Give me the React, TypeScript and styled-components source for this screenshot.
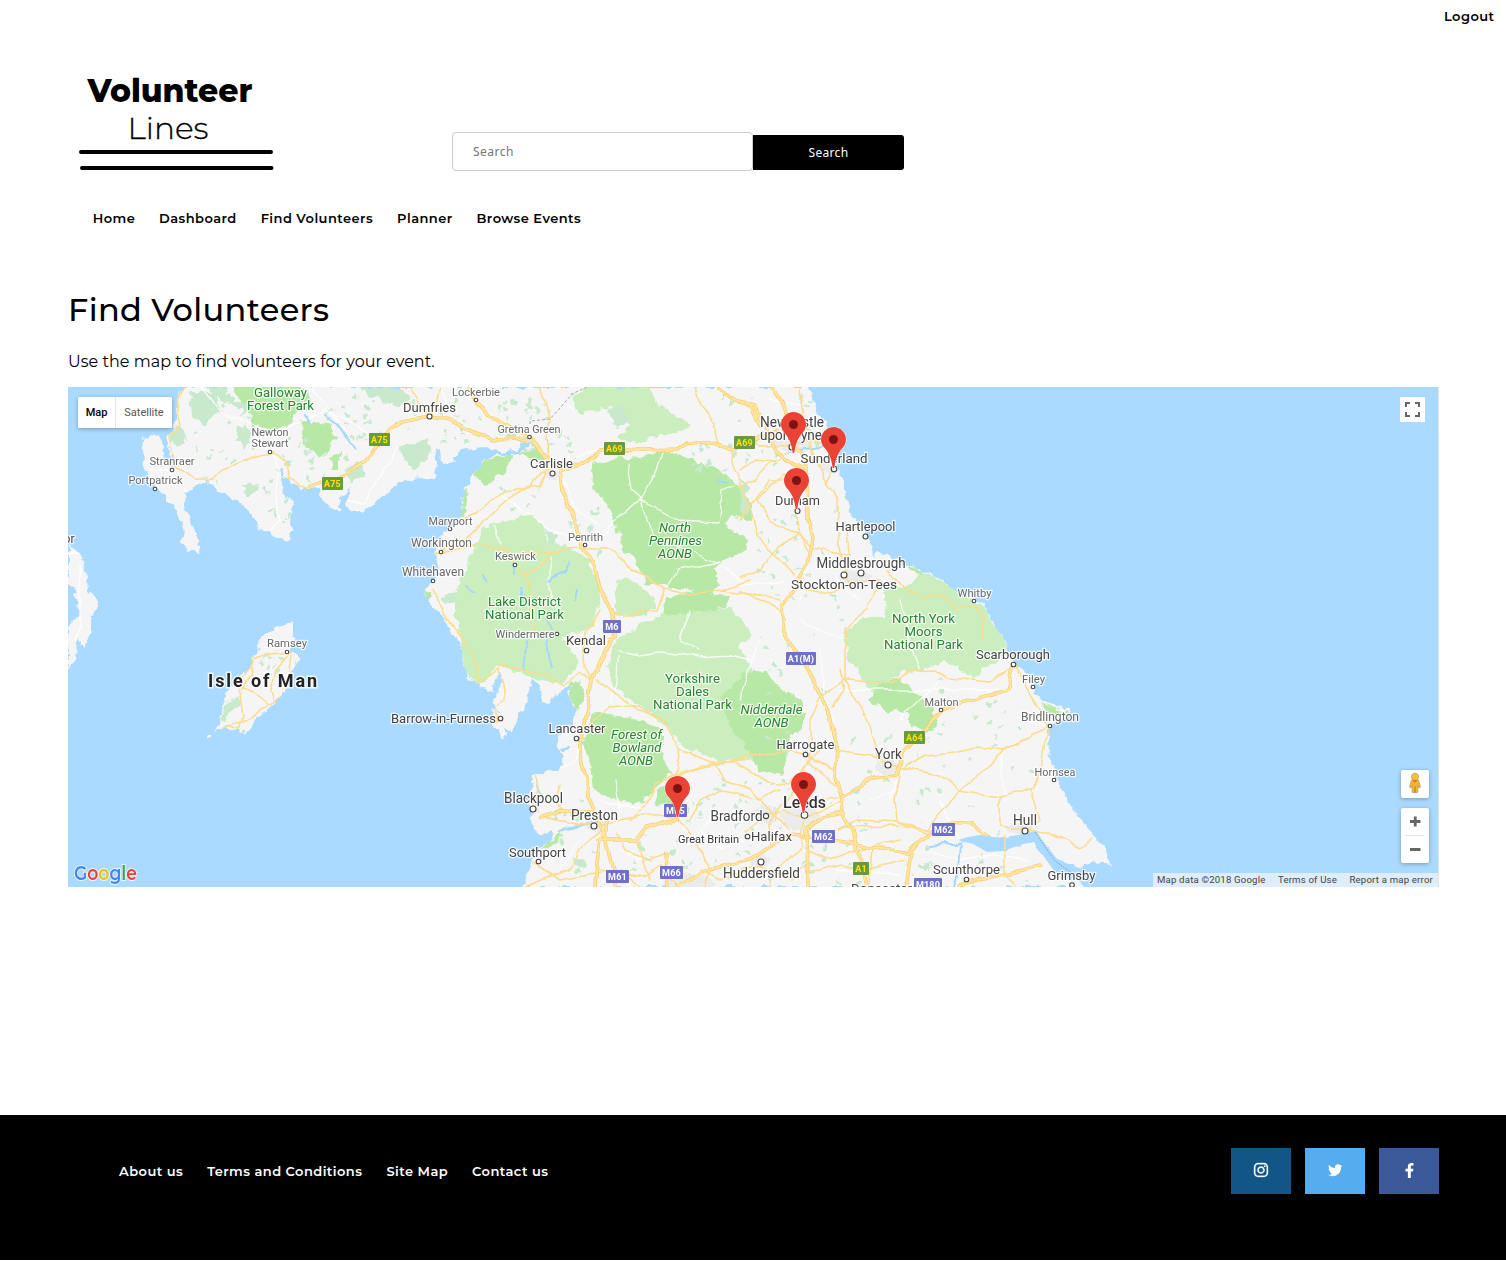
import React from "react";
import styled, { createGlobalStyle } from "styled-components";
import { FaInstagram, FaTwitter, FaFacebookF } from "react-icons/fa";

const heading = `Montserrat, Inter, "Noto Sans", sans-serif`;
const small = `"Noto Sans", "DejaVu Sans", sans-serif`;
const mapFont = `Roboto, "Liberation Sans", sans-serif`;

const GlobalStyle = createGlobalStyle`
  * { box-sizing: border-box; }
  body { margin: 0; background: #fff; color: #000; font-family: ${heading}; }
  a { color: inherit; text-decoration: none; }
`;

const Page = styled.div`
  display: flex;
  flex-direction: column;
  min-height: 1261px;
`;

const TopBar = styled.div`
  display: flex;
  justify-content: flex-end;
  height: 33px;
  padding: 8px 11.5px 0 0;
`;

const NavLink = styled.a`
  font-size: 13px;
  font-weight: 600;
  line-height: 16px;
  letter-spacing: 0.45px;
  white-space: nowrap;
`;

const Header = styled.header`
  display: flex;
  height: 147px;
  padding-left: 68px;
`;

const LogoBox = styled.a`
  display: block;
  width: 384px;
  padding-top: 37px;
`;

const SearchForm = styled.form`
  display: flex;
  align-items: flex-start;
  padding-top: 99px;
`;

const SearchInput = styled.input`
  width: 301px;
  height: 39px;
  padding: 0 20px;
  border: 1px solid #ccc;
  border-radius: 4px;
  background: #fff;
  font: 12px ${small};
  letter-spacing: 0.5px;
  &::placeholder { color: #757575; opacity: 1; }
`;

const SearchButton = styled.button`
  width: 151px;
  height: 35px;
  margin-top: 3px;
  padding: 0;
  border: 0;
  border-radius: 0 3px 3px 0;
  background: #000;
  color: #fff;
  font: 12px ${small};
  letter-spacing: 0.3px;
`;

const MainNav = styled.nav`
  display: flex;
  gap: 23.9px;
  height: 80px;
  padding: 30px 0 0 92.7px;
`;

const Main = styled.main`
  padding: 0 67px 0 68px;
  height: 855px;
`;

const Title = styled.h1`
  margin: 0;
  padding-top: 28px;
  font-size: 32px;
  font-weight: 500;
  line-height: 44px;
  letter-spacing: 0.35px;
`;

const Intro = styled.p`
  margin: 0;
  padding-top: 19px;
  height: 55px;
  font-size: 16px;
  line-height: 22px;
  letter-spacing: 0.03px;
`;

const MapFrame = styled.section`
  position: relative;
  height: 500px;
  overflow: hidden;
  border-right: 1px solid #e5e3df;
  background: #aadaff;
  font-family: ${mapFont};
`;

const MapCanvas = styled.svg`
  display: block;
  width: 1370px;
  height: 500px;
`;

const TypeSwitch = styled.div`
  position: absolute;
  top: 10px;
  left: 10px;
  display: flex;
  height: 31px;
  border-radius: 2px;
  overflow: hidden;
  background: #fff;
  box-shadow: 0 1px 4px rgba(0, 0, 0, 0.3);
`;

const TypeOption = styled.button<{ $active?: boolean }>`
  width: ${(p) => (p.$active ? 37 : 57)}px;
  padding: 0;
  border: 0;
  border-left: ${(p) => (p.$active ? "0" : "1px solid #e6e6e6")};
  background: #fff;
  color: ${(p) => (p.$active ? "#000" : "#565656")};
  font: ${(p) => (p.$active ? 500 : 400)} 11px ${mapFont};
`;

const FullscreenButton = styled.button`
  position: absolute;
  top: 10px;
  right: 13px;
  width: 25px;
  height: 25px;
  padding: 0;
  border: 0;
  background: #fff;
  svg { display: block; }
`;

const Controls = styled.div`
  position: absolute;
  right: 9px;
  bottom: 24px;
  display: flex;
  flex-direction: column;
  gap: 10px;
`;

const ControlCard = styled.div`
  display: flex;
  flex-direction: column;
  align-items: center;
  width: 28px;
  border-radius: 2px;
  background: #fff;
  box-shadow: 0 1px 4px rgba(0, 0, 0, 0.3);
  svg { display: block; }
`;

const Legal = styled.div`
  position: absolute;
  right: 0;
  bottom: 0;
  display: flex;
  justify-content: space-between;
  width: 285px;
  height: 14px;
  padding: 0 5px 0 4px;
  background: rgba(245, 245, 245, 0.7);
  color: #444;
  font-size: 9.6px;
  line-height: 14px;
  letter-spacing: 0.19px;
`;

const Footer = styled.footer`
  display: flex;
  justify-content: space-between;
  height: 145px;
  padding: 33px 67px 0 119px;
  background: #000;
  color: #fff;
`;

const FooterLinks = styled.nav`
  display: flex;
  gap: 24px;
  padding-top: 15px;
`;

const SocialLinks = styled.div`
  display: flex;
  gap: 14px;
`;

const SocialLink = styled.a<{ $color: string; $icon: number }>`
  display: flex;
  align-items: center;
  justify-content: center;
  width: 60px;
  height: 46px;
  padding-bottom: 2px;
  background: ${(p) => p.$color};
  font-size: ${(p) => p.$icon}px;
`;

const Logo = () => (
  <svg width="220" height="110" viewBox="68 70 220 110">
    <g textAnchor="start" fontFamily={heading} fontSize="32">
      <text x="87.5" y="102" fontWeight="800" textLength="165" lengthAdjust="spacingAndGlyphs">Volunteer</text>
      <text x="127.5" y="139" fontSize="31" fontWeight="350" textLength="81" lengthAdjust="spacingAndGlyphs" stroke="#000" strokeWidth=".3">Lines</text>
    </g>
    <path d="M81 152H271M82 168H271.5" stroke="#000" strokeWidth="4" strokeLinecap="round" />
  </svg>
);

/* Map geometry, on a grid whose origin is the map's north-west corner at (68, 387). */
const mainland =
  "185,387 178,395 175,410 177,422 168,436 171,449 174,462 173,467 168,465 164,453 163,442 157,434 145,437 142,447 143,465 151,480 160,492 171,504 178,517 185,530 181,542 188,551 201,554 198,547 199,540 193,530 190,517 184,504 185,494 195,487 210,481 218,493 228,494 245,507 253,517 256,525 271,535 286,540 294,530 290,524 291,510 296,502 283,494 281,475 288,480 301,490 318,487 320,497 331,507 340,512 341,497 351,487 346,504 351,511 365,511 373,505 388,492 401,482 420,478 432,480 437,464 435,449 442,450 443,464 453,462 462,450 483,447 500,452 517,450 527,442 532,440 528,447 517,455 497,455 485,459 475,472 465,487 463,504 460,517 448,529 437,544 435,555 440,564 432,582 423,590 430,604 443,620 455,637 462,650 463,663 468,677 480,688 493,692 495,685 500,670 502,683 495,700 498,710 491,709 493,723 502,738 508,737 505,728 512,732 515,722 527,703 530,690 532,678 540,688 542,702 547,705 553,697 562,690 573,685 567,693 577,710 573,723 557,737 557,747 563,753 563,765 557,770 533,775 532,787 530,810 532,827 540,833 553,832 550,840 540,850 532,863 522,887 1087,887 1073,880 1053,870 1040,850 1033,842 1023,843 1003,850 987,850 973,842 960,843 963,840 980,837 993,838 1007,838 1023,835 1035,832 1043,843 1053,857 1067,863 1080,867 1093,862 1110,865 1113,875 1110,863 1103,847 1093,833 1073,810 1060,787 1052,767 1047,743 1052,723 1070,715 1068,710 1043,702 1035,695 1030,677 1020,670 1012,657 1007,645 1003,637 990,620 987,609 973,597 957,592 940,579 920,569 903,564 890,557 878,552 873,557 872,547 865,537 867,530 857,522 848,510 845,490 840,474 832,447 825,420 815,407 808,387";
const isleOfMan =
  "292,622 275,628 261,637 256,650 250,667 238,680 228,690 224,707 218,723 215,733 223,728 238,730 245,735 248,727 258,717 270,707 285,693 288,677 293,668 301,658 293,655 291,647 292,633";
const calf = "207,736 211,733 212,737 208,738";
const ireland =
  "68,544 73,549 80,554 88,577 89,590 96,600 95,614 91,617 91,630 83,648 78,637 76,643 77,657 68,670 68,633 70,635 71,622 79,615 76,592 68,584";
const humber =
  "958,840 968,837 980,835 993,837 1007,838 1023,834 1036,831 1046,845 1057,859 1075,867 1074,881 1055,872 1042,854 1034,842 1023,844 1003,851 987,852 973,844";

const nationalParks = [
  "493,524 530,515 543,524 547,540 577,550 590,564 600,587 600,604 593,627 563,637 580,663 562,685 530,677 500,665 478,687 463,667 460,640 455,617 455,597 467,567 477,540 483,527",
  "617,640 640,625 660,615 700,610 730,608 742,620 752,635 738,648 748,662 757,675 740,690 725,705 735,730 750,745 757,760 720,762 712,757 685,748 670,730 650,712 625,697 612,682 608,665 613,655",
  "617,580 625,575 655,598 655,610 640,617 614,613",
  "883,590 907,587 920,570 947,584 973,600 987,610 1003,637 1010,653 987,667 973,678 943,660 927,670 900,673 873,693 863,680 850,660 847,647 843,634 863,617 887,617",
  "573,400 587,387 650,387 657,404 680,417 690,427 653,437 633,444 617,437 630,424 613,407 580,414",
];
const naturalBeauty = [
  "592,464 613,460 653,455 663,449 683,457 700,464 720,470 733,480 748,495 752,520 733,517 723,524 745,537 748,550 725,560 715,570 718,584 710,593 690,590 667,587 647,584 633,557 623,550 617,527 607,504 593,487",
  "667,597 700,590 730,597 727,607 690,613 663,615",
  "720,697 748,670 765,672 782,690 803,700 803,730 790,735 785,775 768,773 757,770 750,750 735,735 727,715",
  "593,713 613,715 647,722 663,730 663,757 672,773 660,783 640,803 613,800 593,790 590,763 583,743",
  "655,805 660,787 672,783 672,806",
  "568,683 580,680 585,700 577,712 570,700",
  "485,459 513,454 503,474 487,487 473,474",
  "517,454 537,447 543,460 530,458",
  "867,700 880,684 897,678 915,692 933,707 937,727 927,733 910,723 907,713 887,710",
  "1038,702 1065,711 1071,716 1048,712",
  "230,387 300,387 312,400 300,405 290,425 270,430 252,427 250,415 240,400",
  "301,420 333,425 336,440 320,458 303,443",
  "332,460 340,450 338,468 331,470",
  "465,487 467,495 463,517 459,519",
  "545,843 562,833 563,836 548,849 542,850",
  "905,566 918,569 925,575 910,572",
  "423,590 430,594 429,603",
  "848,507 845,492 849,500 853,512",
];
const forests = [
  "190,392 215,392 222,410 205,424 192,414",
  "168,430 180,427 188,442 175,448",
  "206,387 225,387 232,400 250,405 245,412 226,402",
  "238,424 252,433 245,450 237,440",
  "244,485 258,484 257,492 246,496",
  "345,470 360,460 365,474 350,482",
  "358,387 398,387 410,398 398,408 380,400 372,396",
  "400,445 428,440 430,458 413,470 403,458",
  "228,702 240,696 241,705 230,710 224,722 220,720",
  "259,663 264,660 263,665",
  "608,410 620,405 630,420 618,428",
  "742,480 748,487 746,515 740,512",
  "575,858 585,860 584,868 576,866",
  "917,865 932,862 928,872",
  "545,530 558,535 557,544 549,541",
  "440,598 454,592 456,602 446,604",
];

const trunk = [
  "470,387 477,404 487,415 510,427 530,437 540,449 550,462 560,470 562,490 573,517 582,547 592,560 600,587 613,614 615,637 610,640 592,680 587,707 580,743 580,757 587,777 588,797 595,813 603,830 607,847 613,870 617,887",
  "603,830 600,840 597,863 595,887",
  "598,840 637,840 647,827 677,818",
  "540,817 560,812 593,813",
  "773,387 783,404 789,425 795,445 806,455 807,470 808,520 813,537 808,564 797,584 783,604 785,637 803,660 820,693 830,717 837,747 835,777 842,797 843,817 853,830 857,850 863,863 868,887",
  "677,887 690,880 707,870 750,860 770,847 793,835 853,843 873,848 907,852 930,832 953,823 973,825 987,837",
  "777,452 793,464 807,470",
  "910,852 905,887",
  "843,813 823,817 807,830 808,887",
  "665,853 667,887",
  "842,797 873,778 897,775 903,753 930,723 943,708 973,700 1007,690 1012,667",
  "308,489 321,482 345,477 355,467 366,462 388,429 401,422 430,416 450,420 467,430 493,440 530,439",
  "560,472 583,464 600,452 627,449 640,450 677,449 687,442 720,445 730,449 750,442 777,430",
  "717,387 735,400 755,406 765,425 777,452",
  "740,403 751,407 760,425",
  "960,885 980,879 1010,873 1040,866",
  "598,840 607,830 607,820",
];
const roads = [
  "185,387 178,398 177,412 180,425 168,437 173,455 175,467 195,479 208,479 245,460 275,452 285,462 290,480 308,489",
  "410,387 418,402 430,416", "430,416 437,400 440,387", "540,387 545,405 548,420 545,440 550,462",
  "695,387 700,405 715,425 718,445", "730,449 733,465 743,487 750,505 757,535 775,555 795,577",
  "740,487 755,480 770,464 780,460", "740,440 760,445 785,445 810,440 828,443", "800,387 802,410 810,440 820,470 826,484",
  "834,468 825,484 838,500 838,540 845,565 848,582", "808,490 785,475 770,485 757,500",
  "797,510 797,525 803,540 808,550", "740,578 760,570 780,545 800,535 813,547 850,555 848,530 868,525",
  "740,590 770,605 783,612", "797,587 830,593 850,583 880,580 870,600 865,610 845,630 845,680 863,710 873,740 878,760",
  "887,570 905,590 925,598 945,595 955,607 975,608 985,620 983,640", "845,680 873,682 893,682 910,672 935,671 950,678 990,682 1010,668",
  "832,708 845,690 840,670", "810,758 810,720 820,695 845,680", "740,758 760,753 790,751 808,755 835,770",
  "837,750 870,755 903,768 925,755 955,752 975,747 1003,750 1048,727", "903,768 940,775 960,790 1000,797 1030,790 1040,775 1045,740 1052,725",
  "900,775 895,800 897,822 930,835", "960,790 940,810 927,830 897,826 853,827", "1003,750 985,770 960,790",
  "1030,790 1040,820 1030,830 1000,825 1000,797", "1025,832 1055,835 1080,848 1093,838",
  "1015,660 1030,695 1047,723 1050,728", "1005,853 1005,870 1015,887",
  "500,670 505,690 505,700 495,710 498,722", "500,668 478,682 471,650 452,625 440,605 433,587",
  "435,555 445,550 470,535 490,515 520,490 540,487 545,470", "460,522 480,510 500,493 530,487",
  "440,555 460,548 480,545 505,550 515,565 525,575 530,600 535,635", "505,560 540,552 580,549 610,549 633,570 665,588 690,594 720,590 750,580",
  "665,588 657,610 630,615 613,615", "720,590 750,593 780,600", "525,575 540,565 550,552",
  "500,665 530,672 545,672 562,685 580,672 592,680", "592,680 583,660 585,635 600,610",
  "597,680 630,705 650,713 665,722 680,750 675,775", "587,725 610,708 640,705 650,713",
  "675,775 700,768 735,760 750,760", "630,820 650,800 655,785 675,773 715,763 725,780 750,790 770,810 790,830",
  "680,750 712,762 735,762 770,783 790,785 805,765", "540,817 570,823 600,825 640,815 660,815 677,818",
  "600,830 580,850 570,870 548,877 525,887", "533,863 560,880 600,873", "600,870 645,877 660,865 677,887",
  "677,818 695,840 710,870 705,887", "637,843 650,880", "740,795 720,790 700,800 690,820",
  "745,830 765,815 785,810 805,818 845,800", "770,847 768,825 780,805 800,785 805,765 825,745",
  "808,760 825,775 835,785", "805,818 800,850 775,870 770,887", "745,870 760,865 790,880 808,865",
  "808,850 830,860 855,850 900,840", "808,875 840,865 865,870 905,860", "873,848 870,887",
  "838,828 855,820 900,822 930,832", "583,463 560,465 540,472 530,488",
  "740,520 755,500 770,480 808,480", "565,815 556,800 560,785",
  "740,470 755,460 775,462", "757,500 770,520 785,530 800,535", "535,775 538,790 534,805", "618,835 625,850 650,860 665,853",
  "620,870 640,887", "700,870 720,880 745,870", "820,800 842,797", "780,790 760,800 740,795",
  "292,651 270,653 253,659 250,667 238,680", "292,651 275,670 270,690 273,700", "238,680 243,715 240,728",
  "250,665 252,673 242,690", "238,687 255,693 268,703", "283,697 268,703 255,715 243,722 225,725 240,729",
  "292,655 290,670 285,690",
];
const lanes = [
  "200,387 210,400 225,415 245,420 275,435 310,417 325,412 345,418 370,435", "312,387 325,405 345,430 350,445",
  "275,455 278,475 275,500 280,520 270,528", "340,500 365,503 370,490 388,465 398,445",
  "185,494 170,470 150,470", "550,462 600,450", "565,480 575,510 600,525",
  "663,452 655,475 641,500 655,508 675,520 720,522", "628,463 632,490 641,498 625,513 612,520 595,545",
  "641,500 655,540 690,550 722,566 740,580", "720,518 722,490 735,485", "667,588 678,570 720,562",
  "500,495 530,515 545,525 580,545", "550,555 550,590 560,620", "495,525 500,545",
  "440,530 455,540 475,550", "618,650 640,655 660,652 700,657 730,655 752,660", "618,655 617,685 610,705",
  "690,610 680,640 700,650", "740,585 783,582", "810,565 800,600", "800,620 845,640", "820,650 825,700 835,720",
  "900,600 910,640 920,670", "940,680 920,700 900,720", "1000,750 1005,800", "900,775 890,800",
  "555,770 575,760 580,740", "600,800 640,808", "620,810 615,780", "68,552 78,552", "79,565 80,600 80,625 76,640",
  "840,690 1000,690", "940,800 960,840", "870,800 900,790", "720,810 700,830 720,850 745,840",
  "620,850 640,860", "580,840 560,870", "770,400 800,405", "560,400 575,410", "440,387 450,410",
  "835,870 900,875", "930,850 960,860 1000,855 1030,860", "760,640 740,700", "860,600 845,590",
];
const waters = [
  "513,565 515,575", "550,583 553,577 565,572 570,563", "483,574 485,582", "467,586 475,592", "546,621 553,630",
  "575,600 577,590", "549,632 547,650 550,667", "527,640 523,670", "522,600 520,587", "325,416 337,425 345,437 355,450",
  "800,449 815,447 835,443", "930,845 945,843 955,847 963,840", "960,843 958,870 955,887", "557,830 580,825 600,822",
  "305,415 308,421", "718,480 728,482", "536,780 538,790 545,800", "560,750 568,748", "281,468 285,480",
];

/* Deterministic scatter of small woodland specks over open country. */
const specks = (() => {
  const zones: [number, number, number, number, number][] = [
    [195, 395, 160, 90, 60], [350, 395, 190, 50, 50], [520, 395, 60, 60, 16], [560, 500, 40, 60, 8],
    [690, 395, 130, 80, 34], [755, 500, 85, 110, 30], [760, 620, 85, 130, 18], [850, 720, 190, 130, 34],
    [600, 800, 260, 85, 60], [900, 855, 140, 28, 12], [540, 800, 60, 75, 10], [940, 680, 80, 60, 10],
    [258, 650, 30, 30, 8], [265, 480, 25, 45, 10], [500, 488, 50, 28, 8], [690, 775, 110, 40, 18],
  ];
  let seed = 17;
  const next = () => ((seed = (seed * 16807) % 2147483647) / 2147483647);
  return zones.flatMap(([x, y, w, h, n]) =>
    Array.from({ length: n }, () => ({ x: x + next() * w, y: y + next() * h, rx: 0.8 + next() * 3, ry: 0.6 + next() * 1.8, r: next() * 180 }))
  );
})();

const towns: [number, number, number][] = [
  [594, 826, 3], [533, 809, 3], [761, 862, 3], [888, 765, 3], [804.5, 815, 3.3], [1025, 831, 3],
  [844, 575, 3], [861, 573, 3], [865.5, 536.5, 2.5], [834, 469, 2.8], [797.5, 511, 2.5], [792, 447, 3], [552.5, 473.5, 2.5], [429.5, 416.5, 2.5],
  [476, 400, 1.8], [529.5, 437, 1.8], [270, 452, 1.8], [172, 470, 1.8], [155, 489, 1.8], [450, 529, 1.8], [441, 552, 1.8],
  [433, 581, 1.8], [515, 565, 1.8], [585, 545, 1.8], [557, 634, 1.8], [586.5, 650.5, 2.3], [500.5, 718.5, 2.3], [576.5, 738.5, 2.3],
  [538.5, 861.5, 2.3], [747.5, 836.5, 2.3], [766, 816, 2.6], [805.5, 754.5, 2.3], [941, 710, 1.8], [1013.5, 664.5, 2.3], [1033, 687, 1.8],
  [1050, 726, 1.8], [1054, 780, 1.8], [974, 601, 1.8], [287, 652, 1.8], [966.5, 879.5, 2.3], [1072, 885, 2.3],
];

type Label = [text: string, x: number, y: number, width: number, size: number];
const cities: Label[] = [
  ["Dumfries", 429.5, 411.5, 53, 13], ["Carlisle", 551.5, 467.5, 43, 13], ["Sunderland", 834, 462.5, 67, 13],
  ["Durham", 797.5, 504.5, 45, 13], ["Hartlepool", 865.5, 530.5, 60, 13], ["Middlesbrough", 861, 568, 89, 14],
  ["Stockton-on-Tees", 844, 589.4, 106, 13], ["Kendal", 586, 645.4, 40, 13], ["Barrow-in-Furness", 443.5, 723.4, 105, 13],
  ["Lancaster", 577, 732.5, 57, 13], ["Blackpool", 533.5, 803, 59, 14], ["Preston", 594.5, 820, 47, 14],
  ["Southport", 537.5, 856.5, 57, 13], ["Bradford", 736.5, 821, 52, 14], ["Halifax", 771.5, 841.4, 41, 13],
  ["Huddersfield", 761.5, 878, 77, 14], ["Harrogate", 805.5, 749.4, 58, 13], ["York", 888.5, 759, 27, 14],
  ["Hull", 1025, 825, 24, 14], ["Scarborough", 1013, 659.4, 74, 13], ["Scunthorpe", 966.5, 873.5, 67, 13],
  ["Grimsby", 1071.5, 880.4, 48, 13], ["Doncaster", 881.5, 893, 61, 13],
  ["Newcastle", 792, 427, 64, 14], ["upon Tyne", 791, 440, 62, 14], ["or", 69, 543, 11, 13],
];
const smallTowns: Label[] = [
  ["Lockerbie", 476, 396, 48, 11], ["Gretna Green", 529, 433, 63, 11], ["Newton", 270, 436, 37, 11],
  ["Stewart", 270, 447, 37, 11], ["Stranraer", 172, 465, 45, 11], ["Portpatrick", 155.5, 484, 54, 11],
  ["Maryport", 450.5, 525, 44, 11], ["Workington", 441.5, 547.4, 61, 12], ["Whitehaven", 433, 576.4, 62, 12],
  ["Keswick", 515.5, 560, 41, 11], ["Penrith", 585.5, 541, 35, 11], ["Windermere", 525, 638, 59, 11],
  ["Ramsey", 287, 647, 40, 11], ["Whitby", 974.5, 597, 34, 11], ["Filey", 1033.5, 683, 23, 11],
  ["Malton", 941.5, 706, 34, 11], ["Bridlington", 1050, 721.4, 58, 12], ["Hornsea", 1055, 776, 41, 11],
];
const parkNames: Label[] = [
  ["Galloway", 280.5, 397.4, 53, 13], ["Forest Park", 280.5, 410.4, 67, 13], ["Lake District", 524.5, 606.4, 73, 13],
  ["National Park", 524.5, 619.4, 79, 13], ["Yorkshire", 692.5, 683.4, 55, 13], ["Dales", 692.5, 696.4, 33, 13],
  ["National Park", 692.5, 709.4, 79, 13], ["North York", 923.5, 623.4, 63, 13], ["Moors", 923.5, 636.4, 38, 13], ["National Park", 923.5, 649.4, 79, 13],
];
const reserveNames: Label[] = [
  ["North", 675, 532, 32, 13], ["Pennines", 675.5, 545, 53, 13], ["AONB", 675, 558, 34, 13], ["Nidderdale", 771.5, 714, 62, 13],
  ["AONB", 771.5, 727, 34, 13], ["Forest of", 636.5, 739, 51, 13], ["Bowland", 637, 752, 49, 13], ["AONB", 636, 765, 34, 13],
];
const shields: [string, number, number, number, boolean][] = [
  ["A75", 379.5, 439.5, 21, true], ["A75", 332.5, 483.5, 21, true], ["A69", 614.5, 448.5, 21, true], ["A69", 744.5, 442.5, 21, true],
  ["A64", 914.5, 737.5, 21, true], ["A1", 861, 868.5, 16, true], ["M6", 612, 626.5, 18, false], ["A1(M)", 801, 658.5, 30, false],
  ["M62", 823.5, 836.5, 23, false], ["M62", 943.5, 829.5, 23, false], ["M61", 617.5, 876.5, 23, false],
  ["M66", 671.5, 872.5, 23, false], ["M65", 675.5, 810.5, 23, false], ["M180", 928, 884.5, 28, false],
];
const pins: [number, number][] = [[793.5, 453], [833.5, 468], [796.5, 509], [677.5, 817], [803.5, 813]];

const LabelGroup = ({ items, ...rest }: { items: Label[] } & React.SVGProps<SVGGElement>) => (
  <g textAnchor="middle" stroke="#fff" strokeOpacity=".8" strokeWidth="2.5" paintOrder="stroke" strokeLinejoin="round" {...rest}>
    {items.map(([text, x, y, width, size]) => (
      <text key={text + x + y} x={x} y={y} textLength={width} lengthAdjust="spacingAndGlyphs" fontSize={size}>{text}</text>
    ))}
  </g>
);

const Lines = ({ items, ...rest }: { items: string[] } & React.SVGProps<SVGGElement>) => (
  <g fill="none" strokeLinejoin="round" strokeLinecap="round" {...rest}>
    {items.map((points) => <polyline key={points} points={points} />)}
  </g>
);

const Areas = ({ items, ...rest }: { items: string[] } & React.SVGProps<SVGGElement>) => (
  <g {...rest}>{items.map((points) => <polygon key={points} points={points} />)}</g>
);

const VolunteerMap = () => (
  <MapCanvas viewBox="68 387 1370 500" fontFamily={mapFont}>
    <defs>
      <filter id="coast" filterUnits="userSpaceOnUse" x="60" y="380" width="1390" height="515" colorInterpolationFilters="sRGB">
        <feTurbulence type="fractalNoise" baseFrequency=".11" numOctaves="3" seed="4" result="noise" />
        <feDisplacementMap in="SourceGraphic" in2="noise" scale="9" xChannelSelector="R" yChannelSelector="G" />
      </filter>
      <filter id="bend" filterUnits="userSpaceOnUse" x="60" y="380" width="1390" height="515" colorInterpolationFilters="sRGB">
        <feTurbulence type="fractalNoise" baseFrequency=".05" numOctaves="2" seed="9" result="noise" />
        <feDisplacementMap in="SourceGraphic" in2="noise" scale="7" xChannelSelector="R" yChannelSelector="G" />
      </filter>
      <clipPath id="land"><polygon points={mainland} /><polygon points={isleOfMan} /><polygon points={ireland} /></clipPath>
    </defs>
    <Areas items={[mainland, isleOfMan, calf, ireland]} fill="#f5f5f5" filter="url(#coast)" />
    <g clipPath="url(#land)">
      <g filter="url(#coast)">
        <Areas items={nationalParks} fill="#cbeebf" />
        <Areas items={naturalBeauty} fill="#b8e8a5" />
        <Areas items={forests} fill="#c8e9cb" />
        <g fill="#c8e9cd">
          {specks.map((s, i) => <ellipse key={i} cx={s.x} cy={s.y} rx={s.rx} ry={s.ry} transform={`rotate(${s.r} ${s.x} ${s.y})`} />)}
        </g>
        <g fill="#ebebeb">
          <ellipse cx="793" cy="440" rx="21" ry="10" /><ellipse cx="830" cy="465" rx="9" ry="8" /><ellipse cx="855" cy="577" rx="16" ry="7" />
          <ellipse cx="800" cy="817" rx="19" ry="13" /><ellipse cx="765" cy="815" rx="12" ry="10" /><ellipse cx="888" cy="767" rx="11" ry="8" />
          <ellipse cx="1022" cy="829" rx="15" ry="6" /><ellipse cx="690" cy="883" rx="25" ry="8" /><ellipse cx="595" cy="825" rx="10" ry="6" />
          <ellipse cx="536" cy="803" rx="5" ry="12" /><ellipse cx="760" cy="860" rx="9" ry="6" /><ellipse cx="553" cy="475" rx="7" ry="5" />
        </g>
      </g>
      <g filter="url(#bend)">
        <Lines items={lanes} stroke="#fff" strokeWidth="1.3" strokeOpacity=".85" />
        <Lines items={waters} stroke="#a5d6fb" strokeWidth="1.9" />
        <Lines items={roads} stroke="#fcdc8c" strokeWidth="1.5" />
      </g>
      <g filter="url(#bend)">
        <Lines items={trunk} stroke="#f8ce70" strokeWidth="3.6" />
        <Lines items={trunk} stroke="#ffe59e" strokeWidth="2.1" />
      </g>
    </g>
    <Areas items={[humber]} fill="#aadaff" />
    <path d="M1005 835V853" stroke="#fcdc8c" strokeWidth="1.5" />
    <polyline points="530,424 530,421 550,419 560,408 572,394 587,387" fill="none" stroke="#a9a9a9" strokeDasharray="3 2" />
    <polyline points="1035,832 1045,847 1055,861 1072,873" fill="none" stroke="#7caee0" strokeDasharray="2 1" />
    <g fill="#fff" stroke="#444" strokeWidth="1.1">
      {towns.map(([x, y, r]) => <circle key={`${x}-${y}`} cx={x} cy={y} r={r} />)}
    </g>
    {shields.map(([name, x, y, w, green]) => (
      <g key={name + x}>
        <rect x={x - w / 2} y={y - 6.5} width={w} height="13" rx="1" fill={green ? "#689b3d" : "#7070c8"} />
        <text x={x} y={y + 3.3} textAnchor="middle" fontSize="9" fontWeight="700" letterSpacing=".2" fill={green ? "#ffe100" : "#fff"}>{name}</text>
      </g>
    ))}
    <LabelGroup items={cities} fill="#444" />
    <LabelGroup items={smallTowns} fill="#686868" />
    <LabelGroup items={parkNames} fill="#26862f" />
    <LabelGroup items={reserveNames} fill="#26862f" fontStyle="italic" />
    <LabelGroup items={[["Leeds", 804.5, 808, 43, 16]]} fill="#333" fontWeight="500" />
    <LabelGroup items={[["Great Britain", 708.5, 843, 61, 11]]} fill="#333" />
    <g fontWeight="700" fontSize="18" fill="#222" stroke="#fff" strokeWidth="3" strokeOpacity=".8" paintOrder="stroke">
      <text x="208" y="687" textLength="109">Isle of Man</text>
    </g>
    {pins.map(([x, y]) => (
      <g key={x} transform={`translate(${x} ${y})`}>
        <path d="M-.8 0C-2.2-9-3.5-13-8-19C-11-22-12.5-25-12.5-28.5A12.5 12.5 0 0 1 12.5-28.5C12.5-25 11-22 8-19C3.500-13 2.200-9 .8 0Z" fill="#ea4335" stroke="#fff" strokeWidth="1" paintOrder="stroke" />
        <circle cy="-28.5" r="4.5" fill="#7b1410" />
      </g>
    ))}
    <text x="74" y="880" fontFamily={heading} fontSize="19.5" stroke="#fff" strokeWidth="2" strokeOpacity=".7" paintOrder="stroke" textLength="63" lengthAdjust="spacingAndGlyphs" fontWeight="600">
      <tspan fill="#4285f4">G</tspan><tspan fill="#ea4335">o</tspan><tspan fill="#fbbc05">o</tspan><tspan fill="#4285f4">g</tspan><tspan fill="#34a853">l</tspan><tspan fill="#ea4335">e</tspan>
    </text>
  </MapCanvas>
);

const Pegman = () => (
  <svg width="28" height="28" viewBox="0 0 28 28">
    <path d="M10.5 10H17.5L19.5 17L18 18L16.8 15.5V22.5H11.2V15.5L10 18L8.5 17Z" fill="#f9b529" stroke="#a99b76" strokeWidth=".7" />
    <circle cx="14" cy="6.8" r="3.6" fill="#fcc12f" stroke="#a99b76" strokeWidth=".7" />
    <path d="M11.5 10L14 13L16.5 10Z" fill="#e8791e" /><path d="M14 16.5V22.5" stroke="#c97f16" strokeWidth="1.2" />
  </svg>
);

export default function App() {
  return (
    <Page>
      <GlobalStyle />
      <TopBar><NavLink href="#">Logout</NavLink></TopBar>
      <Header>
        <LogoBox href="#"><Logo /></LogoBox>
        <SearchForm onSubmit={(e) => e.preventDefault()}>
          <SearchInput placeholder="Search" />
          <SearchButton type="submit">Search</SearchButton>
        </SearchForm>
      </Header>
      <MainNav>
        {["Home", "Dashboard", "Find Volunteers", "Planner", "Browse Events"].map((item) => <NavLink href="#" key={item}>{item}</NavLink>)}
      </MainNav>
      <Main>
        <Title>Find Volunteers</Title>
        <Intro>Use the map to find volunteers for your event.</Intro>
        <MapFrame>
          <VolunteerMap />
          <TypeSwitch>
            <TypeOption $active>Map</TypeOption>
            <TypeOption>Satellite</TypeOption>
          </TypeSwitch>
          <FullscreenButton aria-label="Fullscreen">
            <svg width="25" height="25" viewBox="0 0 25 25" fill="none" stroke="#666" strokeWidth="2">
              <path d="M6 10V6H10M15 6H19V10M19 15V19H15M10 19H6V15" />
            </svg>
          </FullscreenButton>
          <Controls>
            <ControlCard><Pegman /></ControlCard>
            <ControlCard>
              <svg width="28" height="55" viewBox="0 0 28 55">
                <path d="M9 13.5H19.5M14.25 8.5V18.5M9 41.5H19.5" stroke="#666" strokeWidth="2.8" />
                <path d="M4 27.5H23" stroke="#e6e6e6" />
              </svg>
            </ControlCard>
          </Controls>
          <Legal><span>Map data ©2018 Google</span><span>Terms of Use</span><span>Report a map error</span></Legal>
        </MapFrame>
      </Main>
      <Footer>
        <FooterLinks>
          {["About us", "Terms and Conditions", "Site Map", "Contact us"].map((item) => <NavLink href="#" key={item}>{item}</NavLink>)}
        </FooterLinks>
        <SocialLinks>
          <SocialLink href="#" $color="#125688" $icon={16}><FaInstagram stroke="currentColor" strokeWidth="10" /></SocialLink>
          <SocialLink href="#" $color="#55acee" $icon={14.5}><FaTwitter /></SocialLink>
          <SocialLink href="#" $color="#3b5998" $icon={15}><FaFacebookF /></SocialLink>
        </SocialLinks>
      </Footer>
    </Page>
  );
}
